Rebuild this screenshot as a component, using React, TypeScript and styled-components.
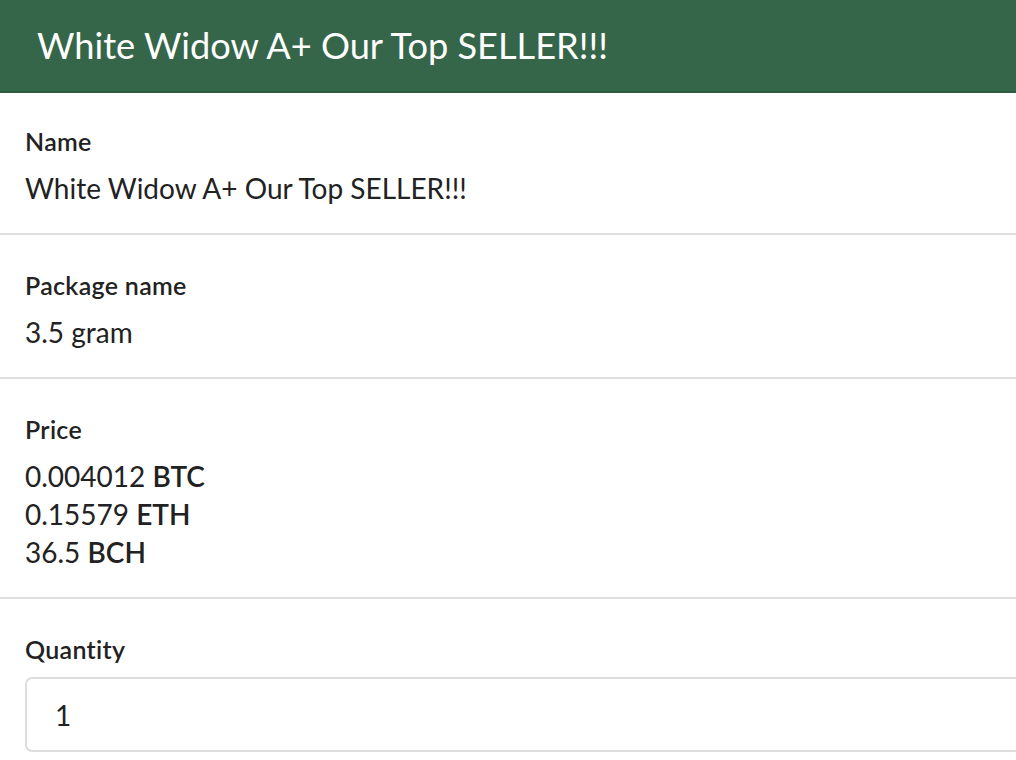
import React from "react";
import styled, { createGlobalStyle } from "styled-components";

const Global = createGlobalStyle`
  html, body { margin: 0; padding: 0; background: #fff; overflow: hidden; }
  body { font-family: Lato, "Open Sans", sans-serif; color: #222; }
  * { box-sizing: border-box; }
`;

const Page = styled.div`
  width: 1016px;
  height: 760px;
  overflow: hidden;
  display: flex;
  flex-direction: column;
`;

const Header = styled.header`
  height: 93px;
  flex: none;
  background: #36664a;
  border-bottom: 2px solid #2f5c42;
  display: flex;
  align-items: center;
  padding: 0 37px;
`;

const Title = styled.h1`
  margin: 0;
  font-family: Lato, sans-serif;
  font-weight: 400;
  font-size: 36.2px;
  line-height: 1.2;
  color: #fff;
`;

const Row = styled.section<{ $last?: boolean }>`
  padding: 33px 25px 26px;
  border-bottom: ${(p) => (p.$last ? "none" : "2px solid #dedede")};
  display: flex;
  flex-direction: column;

  & + & {
    padding-top: 35px;
  }
`;

const Label = styled.div`
  font-size: 25px;
  line-height: 30px;
  font-weight: 600;
  letter-spacing: 0.3px;
  color: #222;
  margin-bottom: 13px;
`;

const Value = styled.div`
  font-size: 28px;
  line-height: 38px;
  color: #222;
`;

const Unit = styled.b`
  font-weight: 600;
`;

const QtyInput = styled.input`
  width: 1100px;
  height: 75px;
  border: 2px solid #dddddd;
  border-radius: 7px;
  padding: 0 28px;
  font-family: Lato, sans-serif;
  font-size: 28px;
  color: #222;
  background: #fff;
  outline: none;
`;

const prices = [
  { amount: "0.004012", unit: "BTC" },
  { amount: "0.15579", unit: "ETH" },
  { amount: "36.5", unit: "BCH" },
];

export default function App() {
  return (
    <Page>
      <Global />
      <Header>
        <Title>White Widow A+ Our Top SELLER!!!</Title>
      </Header>
      <Row>
        <Label>Name</Label>
        <Value>White Widow A+ Our Top SELLER!!!</Value>
      </Row>
      <Row>
        <Label>Package name</Label>
        <Value>3.5 gram</Value>
      </Row>
      <Row>
        <Label>Price</Label>
        {prices.map((p) => (
          <Value key={p.unit}>
            {p.amount} <Unit>{p.unit}</Unit>
          </Value>
        ))}
      </Row>
      <Row $last>
        <Label>Quantity</Label>
        <QtyInput type="text" defaultValue="1" />
      </Row>
    </Page>
  );
}
